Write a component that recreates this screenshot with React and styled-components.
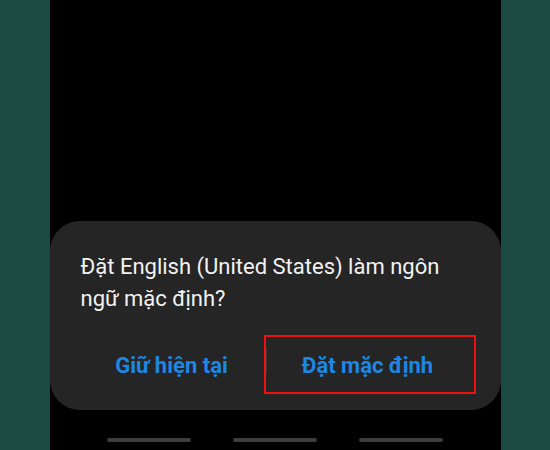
import styled, { createGlobalStyle } from "styled-components";

const GlobalStyle = createGlobalStyle`
  html, body {
    margin: 0;
    padding: 0;
    background: #1b4a43;
    font-family: Roboto, "Noto Sans", sans-serif;
  }
`;

const Page = styled.div`
  width: 550px;
  height: 450px;
  display: flex;
  justify-content: center;
  background: #1b4a43;
  overflow: hidden;
`;

const Phone = styled.div`
  width: 451px;
  height: 100%;
  background: #000;
  display: flex;
  flex-direction: column;
  justify-content: flex-end;
`;

const Dialog = styled.div`
  background: #252525;
  border-radius: 30px;
  padding: 30px 0 20px;
  display: flex;
  flex-direction: column;
  gap: 25px;
`;

const Message = styled.p`
  margin: 0;
  padding: 0 20px 0 31px;
  color: #f2f2f2;
  font-size: 22px;
  line-height: 32px;
`;

const Actions = styled.div`
  display: grid;
  grid-template-columns: 196px 196px;
  padding-left: 24px;
`;

const Action = styled.button`
  position: relative;
  height: 50px;
  border: none;
  background: none;
  padding: 0;
  color: #1d87e3;
  font-family: Roboto, "Noto Sans", sans-serif;
  font-size: 22px;
  font-weight: 700;
  cursor: pointer;

  ${(p) =>
    p.$divider &&
    `
    &::before {
      content: "";
      position: absolute;
      left: -4px;
      top: 8px;
      height: 26px;
      width: 1px;
      background: #3a3a3a;
    }
  `}

  ${(p) =>
    p.$highlight &&
    `
    &::after {
      content: "";
      position: absolute;
      left: -6px;
      right: -10px;
      top: -5px;
      bottom: -4px;
      border: 2px solid #ee1111;
    }
  `}
`;

const NavBar = styled.div`
  display: flex;
  justify-content: center;
  gap: 42px;
  padding: 28px 0 8px;
`;

const NavPill = styled.span`
  width: 84px;
  height: 4px;
  border-radius: 2px;
  background: #3d3d3d;
`;

export default function App() {
  return (
    <Page>
      <GlobalStyle />
      <Phone>
        <Dialog>
          <Message>
            Đặt English (United States) làm ngôn
            <br />
            ngữ mặc định?
          </Message>
          <Actions>
            <Action>Giữ hiện tại</Action>
            <Action $divider $highlight>
              Đặt mặc định
            </Action>
          </Actions>
        </Dialog>
        <NavBar>
          <NavPill />
          <NavPill />
          <NavPill />
        </NavBar>
      </Phone>
    </Page>
  );
}
